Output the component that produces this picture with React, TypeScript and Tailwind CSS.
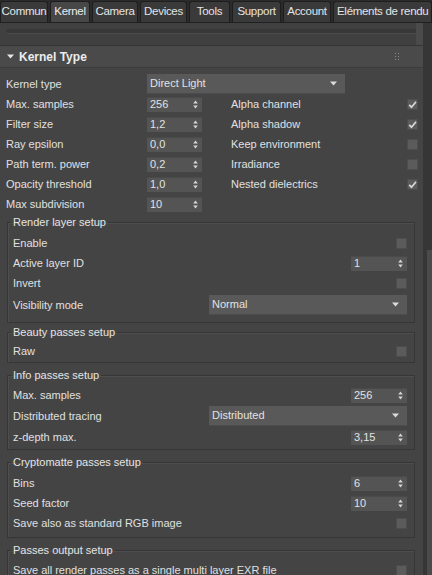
import React from 'react';

const tabs = [
  { label: 'Commun', w: 'w-[48px] justify-center' },
  { label: 'Kernel', w: 'w-[40px] justify-center', active: true },
  { label: 'Camera', w: 'w-[46px] justify-center' },
  { label: 'Devices', w: 'w-[47px] justify-center' },
  { label: 'Tools', w: 'w-[41px] justify-center' },
  { label: 'Support', w: 'w-[49px] justify-center' },
  { label: 'Account', w: 'w-[48px] justify-center' },
  { label: 'Eléments de rendu', w: 'flex-1 justify-start pl-[3px]' },
];

function Arrows() {
  return (
    <svg width="5" height="9" viewBox="0 0 5 9">
      <path d="M2.5 0.5L4.8 3.6H0.2Z M2.5 8.5L0.2 5.4H4.8Z" fill="#d6d6d6" />
    </svg>
  );
}

function Spinner({ value, w = 'w-[56px]' }: { value: string; w?: string }) {
  return (
    <div className={`${w} h-[15px] bg-[#545454] border-t border-[#4a4a4a] flex items-center justify-between pl-[3px] pr-[4px] text-[#e2e2e2]`}>
      <span>{value}</span>
      <Arrows />
    </div>
  );
}

function Dropdown({ value, w }: { value: string; w: string }) {
  return (
    <div className={`${w} h-[20px] bg-[#595959] border-b border-[#4c4c4c] flex items-center justify-between pl-[3px] pr-[8px] text-[#e2e2e2]`}>
      <span>{value}</span>
      <svg width="7" height="5" viewBox="0 0 7 5">
        <path d="M0 0.5H7L3.5 4.5Z" fill="#dcdcdc" />
      </svg>
    </div>
  );
}

function Check({ on = false }: { on?: boolean }) {
  return (
    <div className="w-[11px] h-[11px] bg-[#5b5b5b] border border-[#4d4d4d] flex items-center justify-center shrink-0">
      {on && (
        <svg width="9" height="9" viewBox="0 0 9 9">
          <path d="M1.2 4.8L3.5 7.2L8 1.8" stroke="#d8d8d8" strokeWidth="1.7" fill="none" />
        </svg>
      )}
    </div>
  );
}

function GroupRow({ label, children, h = 'h-[20px]' }: { label: string; children?: React.ReactNode; h?: string }) {
  return (
    <div className={`${h} flex items-center justify-between pl-[5px] pr-[7px]`}>
      <span>{label}</span>
      {children}
    </div>
  );
}

function Group({ title, children, className = '' }: { title: string; children: React.ReactNode; className?: string }) {
  return (
    <fieldset className={`ml-[7px] mr-[8px] border border-[#363636] shadow-[inset_1px_1px_0_#4e4e4e] ${className}`}>
      <legend className="ml-[3px] px-[2px] leading-[14px] text-[#e4e4e4]">{title}</legend>
      {children}
    </fieldset>
  );
}

const kernelRows: { label: string; value: string; right?: string; on?: boolean }[] = [
  { label: 'Max. samples', value: '256', right: 'Alpha channel', on: true },
  { label: 'Filter size', value: '1,2', right: 'Alpha shadow', on: true },
  { label: 'Ray epsilon', value: '0,0', right: 'Keep environment' },
  { label: 'Path term. power', value: '0,2', right: 'Irradiance' },
  { label: 'Opacity threshold', value: '1,0', right: 'Nested dielectrics', on: true },
  { label: 'Max subdivision', value: '10' },
];

export default function App() {
  return (
    <div className="w-[432px] h-[575px] overflow-hidden bg-[#444444] text-[11px] text-[#e0e0e0] font-['Liberation_Sans',Arial,sans-serif] flex flex-col select-none">
      {/* tab strip */}
      <div className="h-[23px] shrink-0 bg-[#2b2b2b] border-b border-[#202020] flex items-end gap-[2px]">
        {tabs.map((t) => (
          <div
            key={t.label}
            className={`${t.w} h-[21px] shrink-0 rounded-t-[3px] border border-b-0 border-[#1e1e1e] flex items-center text-[11.5px] tracking-[-0.3px] whitespace-nowrap overflow-hidden ${
              t.active ? 'bg-[#474747] text-[#ececec]' : 'bg-[#3a3a3a] text-[#e4e4e4]'
            }`}
          >
            {t.label}
          </div>
        ))}
      </div>

      <div className="flex flex-1 min-h-0">
        <div className="w-[423px] shrink-0 flex flex-col">
          {/* rollout strip above */}
          <div className="h-[23px] shrink-0 bg-[#404040] border-b border-[#343434] flex items-start">
            <div className="mt-[6px] ml-[6px] h-[5px] flex-1 rounded-l-[3px] bg-[#383838] border-b border-[#4c4c4c]" />
            <div className="w-[7px] h-full bg-[#4a4a4a]" />
          </div>

          {/* rollout header */}
          <div className="h-[22px] shrink-0 bg-[#4a4a4a] border-b border-[#3c3c3c] flex items-center pl-[7px] pr-[24px]">
            <svg width="7" height="5" viewBox="0 0 7 5">
              <path d="M0 0.5H7L3.5 4.5Z" fill="#e6e6e6" />
            </svg>
            <span className="ml-[5px] text-[12px] font-bold text-[#ececec]">Kernel Type</span>
            <div className="ml-auto grid grid-cols-2 gap-[2px]">
              {Array.from({ length: 6 }).map((_, i) => (
                <div key={i} className="w-[1px] h-[1px] bg-[#8a8a8a]" />
              ))}
            </div>
          </div>

          <div className="pt-[6px] pl-[6px]">
            <div className="h-[20px] flex items-center">
              <span className="w-[141px]">Kernel type</span>
              <Dropdown value="Direct Light" w="w-[198px]" />
            </div>
            {kernelRows.map((r) => (
              <div key={r.label} className="h-[20px] flex items-center">
                <span className="w-[141px]">{r.label}</span>
                <Spinner value={r.value} w="w-[55px]" />
                {r.right && (
                  <>
                    <span className="ml-[29px] flex-1">{r.right}</span>
                    <div className="mr-[5px]">
                      <Check on={r.on} />
                    </div>
                  </>
                )}
              </div>
            ))}
          </div>

          <div className="mt-[1px] flex flex-col">
            <Group title="Render layer setup" className="pt-[4px] pb-[5px]">
              <GroupRow label="Enable">
                <Check />
              </GroupRow>
              <GroupRow label="Active layer ID">
                <Spinner value="1" />
              </GroupRow>
              <GroupRow label="Invert">
                <Check />
              </GroupRow>
              <GroupRow label="Visibility mode" h="h-[24px]">
                <Dropdown value="Normal" w="w-[198px]" />
              </GroupRow>
            </Group>

            <Group title="Beauty passes setup" className="mt-[2px] pt-[2px] pb-[1px]">
              <GroupRow label="Raw">
                <Check />
              </GroupRow>
            </Group>

            <Group title="Info passes setup" className="mt-[5px] pt-[3px] pb-[2px]">
              <GroupRow label="Max. samples">
                <Spinner value="256" />
              </GroupRow>
              <GroupRow label="Distributed tracing" h="h-[22px]">
                <Dropdown value="Distributed" w="w-[198px]" />
              </GroupRow>
              <GroupRow label="z-depth max.">
                <Spinner value="3,15" />
              </GroupRow>
            </Group>

            <Group title="Cryptomatte passes setup" className="mt-[5px] pt-[4px] pb-[4px]">
              <GroupRow label="Bins">
                <Spinner value="6" />
              </GroupRow>
              <GroupRow label="Seed factor">
                <Spinner value="10" />
              </GroupRow>
              <GroupRow label="Save also as standard RGB image">
                <Check />
              </GroupRow>
            </Group>

            <Group title="Passes output setup" className="mt-[5px] pt-[3px] pb-[4px]">
              <GroupRow label="Save all render passes as a single multi layer EXR file">
                <Check />
              </GroupRow>
            </Group>
          </div>
        </div>

        {/* scrollbar */}
        <div className="flex-1 bg-[#363636] flex flex-col">
          <div className="h-[227px] shrink-0" />
          <div className="ml-[4px] flex-1 bg-[#4a4a4a]" />
        </div>
      </div>
    </div>
  );
}
